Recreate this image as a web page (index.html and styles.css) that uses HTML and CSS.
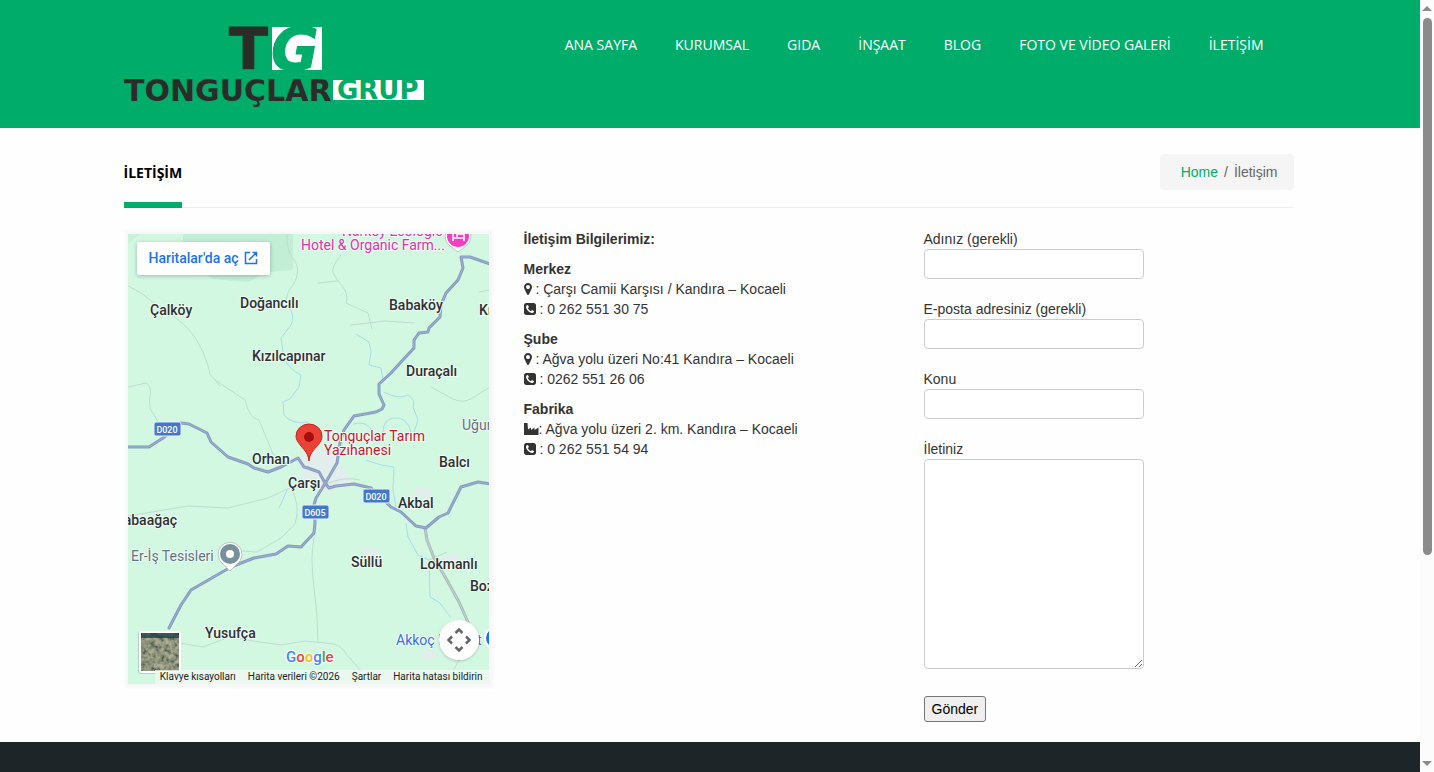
FILE: index.html
```html
<!DOCTYPE html>
<html lang="tr">
<head>
<meta charset="utf-8">
<meta name="viewport" content="width=device-width, initial-scale=1">
<title>İletişim – Tonguçlar Grup</title>
<link rel="stylesheet" href="styles.css">
</head>
<body>
<svg class="sprite" aria-hidden="true">
  <symbol id="i-pin" viewBox="0 0 1024 1792"><path d="M768 640q0-106-75-181t-181-75-181 75-75 181 75 181 181 75 181-75 75-181zm256 0q0 109-33 179l-364 774q-16 33-47.500 52t-67.500 19-67.500-19-46.500-52l-365-774q-33-70-33-179 0-212 150-362t362-150 362 150 150 362z"/></symbol>
  <symbol id="i-phone" viewBox="0 0 1536 1792"><path d="M1280 1193q0-11-2-16t-18-16.500-40.500-25-47.500-26.500-45.500-25-28.500-15q-5-3-19-13t-25-15-21-5q-15 0-36.500 20.500t-39.500 45-38.500 45-33.500 20.500q-7 0-16.500-3.500t-15.500-6.500-17-9.500-14-8.500q-99-55-170-126.500t-127-170.500q-2-3-8.500-14t-9.500-17-6.500-15.500-3.500-16.500q0-13 20.500-33.500t45-38.500 45-39.500 20.500-36.500q0-10-5-21t-15-25-13-19q-3-6-15-28.500t-25-45.500-26.500-47.500-25-40.500-16.500-18-16-2q-48 0-101 22-46 21-80 94.500t-34 130.500q0 16 2.500 34t5 30.500 9 33 10 29.500 12.500 33 11 30q60 164 216.500 320.500t320.500 216.500q6 2 30 11t33 12.500 29.500 10 33 9 30.500 5 34 2.500q57 0 130.500-34t94.500-80q22-53 22-101zm256-777v960q0 119-84.500 203.500t-203.500 84.500h-960q-119 0-203.500-84.500t-84.500-203.500v-960q0-119 84.500-203.500t203.500-84.500h960q119 0 203.500 84.500t84.500 203.500z"/></symbol>
  <symbol id="i-factory" viewBox="0 0 15 14"><path d="M0 1h3.500l.5 6.500L7 5.500v2.500l3.500-2.500v2.500L14.500 5.500V13H0z"/></symbol>
</svg>

<header class="site-header">
  <div class="container header-row">
    <a class="logo" href="#" aria-label="Tonguçlar Grup">
      <svg width="300" height="84" viewBox="0 0 300 84">
        <rect x="148" y="1" width="50" height="43" fill="#fff"/>
        <text x="105" y="43" class="mark-t">T</text>
        <text x="147" y="44" class="mark-g">G</text>
        <rect x="209" y="54" width="91" height="20" fill="#fff"/>
        <text x="0" y="75" class="word-dark">TONGUÇLAR</text>
        <text x="213" y="73" class="word-green">GRUP</text>
      </svg>
    </a>
    <nav class="nav">
      <a href="#">ANA SAYFA</a>
      <a href="#">KURUMSAL</a>
      <a href="#">GIDA</a>
      <a href="#">İNŞAAT</a>
      <a href="#">BLOG</a>
      <a href="#">FOTO VE VİDEO GALERİ</a>
      <a href="#">İLETİŞİM</a>
    </nav>
  </div>
</header>

<main class="main">
  <div class="container">
    <div class="title-row">
      <h1 class="title">İLETİŞİM</h1>
      <nav class="crumbs" aria-label="Sayfa yolu"><a href="#">Home</a><span>/</span><span>İletişim</span></nav>
    </div>

    <div class="columns">
      <figure class="map">
        <svg class="map-art" viewBox="127 234 361 450" preserveAspectRatio="xMidYMid slice" role="img" aria-label="Kandıra haritası">
          <defs>
            <filter id="ground" x="0" y="0" width="1" height="1">
              <feTurbulence type="fractalNoise" baseFrequency="0.220" numOctaves="4" seed="7"/>
              <feColorMatrix values="0.7 0 0 0 -0.080  0.6 0 0 0 -0.010  0.4 0 0 0 0  0 0 0 0 1"/>
            </filter>
          </defs>
          <rect x="127" y="234" width="362" height="450" fill="#d3f8e2"/>
          <path d="M182 234h110v36l-25 2-20 10-35-3-14-9-16-12z" fill="#c3eed6"/>
          <path d="M127 244l12-10h-12z" fill="#c9f1da"/>
          <path class="town" d="M299 455l12-8 22 4 12 22 10 12-20 5-12 4-14-12-14-2zM300 464l-8 14 8 6zM436 560l20-8 4 12-16 4zM416 486l16 4-4 10-16-4zM365 546l14 4-6 8-12-2zM418 654l14-8 4 10-12 4z"/>

          <g class="track">
            <path d="M127 286q14 6 22 14l26 18q16 12 24 28t10 28l10 12"/>
            <path d="M127 387l18-4q6 3 4 14t4 18l6 10"/>
            <path d="M214 380l30 20q4 18 14 20l14 34 14 10"/>
            <path d="M340 255q-10 12-8 18l5 8-20 2m20-2q12 12 8 22l22 10 4 16"/>
            <path d="M286 234q-1 16 7 26t-1 25q-10 12-5 20"/>
            <path d="M430 387l22 12q12 6 24-4l13-8"/>
            <path d="M127 516l60-10 40 2 40-10 26-12"/>
            <path d="M290 488q10 18 4 36l-16 16"/>
            <path d="M325 484q18-8 34-4"/>
            <path d="M313 537q-4 20 0 50t4 56"/>
            <path d="M178 643l24 4 26-10 24 4 28 4 24-4 20 2q16 0 22 12l14 16"/>
            <path d="M230 550l26 2 24-14 8-8"/>
            <path d="M350 325l34-4 30 2"/>
            <path d="M478 292l11-2M428 560l18-8m13 107l-6 10"/>
          </g>
          <g class="river">
            <path d="M287 305q8 12 3 20l-10 13 3 20q6 12 17 17l-2 12-9 12-7 3 1 13q8 10 24 7"/>
            <path d="M355 334l13 8 2 10-2 13 12 3 2 12"/>
            <path d="M383 392q14 8 24 3 8 5 5 12l5 13-4 12"/>
            <path d="M382 432q0-12 10-14 14-2 18 14m-58-8q14-4 20 8"/>
            <path d="M365 460l15 5 13 2-1 23 3 17m10 16l2 14 10 18 11 5 1 37 10 6 11 15"/>
            <path d="M286 490q-4 10-8 18"/>
          </g>

          <g fill="none" stroke-linejoin="round" stroke-linecap="round">
            <path class="road-edge grey" d="M424 528l2 12 7 18 14 24 11 20 12 27"/>
            <path class="road-fill grey" d="M424 528l2 12 7 18 14 24 11 20 12 27"/>
            <path class="road-edge" d="M489 264l-20-7-9 0 2 11-5 12-12 13-5 12-1 12-11 11-1 4-9 1-5 7v8l-13 14-10 11-12 11v10l5 11-2 4-6 3-22 4-10 14-4 13-3 20-11 19-10 16-2 7 1 18-1 10-13 14-13-1-12 8-22 4-23 9-40 23-10 15-12 23"/>
            <path class="road-edge" d="M127 447h21l14-9 18-15 8 1 18 9 4 9 17 15 20 7 6 4 14 4 13-5 17-9 6 9 4 1 11 4 6 11 4 5 7-2 18-2 17 4 20 19 10 5 15 14 10 2 13-11 9-4 13-26 17-5 12 2"/>
            <path class="road-fill" d="M489 264l-20-7-9 0 2 11-5 12-12 13-5 12-1 12-11 11-1 4-9 1-5 7v8l-13 14-10 11-12 11v10l5 11-2 4-6 3-22 4-10 14-4 13-3 20-11 19-10 16-2 7 1 18-1 10-13 14-13-1-12 8-22 4-23 9-40 23-10 15-12 23"/>
            <path class="road-fill" d="M127 447h21l14-9 18-15 8 1 18 9 4 9 17 15 20 7 6 4 14 4 13-5 17-9 6 9 4 1 11 4 6 11 4 5 7-2 18-2 17 4 20 19 10 5 15 14 10 2 13-11 9-4 13-26 17-5 12 2"/>
          </g>

          <g class="shield">
            <rect x="153" y="422" width="27" height="14" rx="2"/><text x="166" y="433">D020</text>
            <rect x="362" y="489" width="27" height="14" rx="2"/><text x="375" y="500">D020</text>
            <rect x="301" y="505" width="27" height="14" rx="2"/><text x="314" y="516">D605</text>
          </g>

          <g class="place">
            <text x="149" y="315">Çalköy</text>
            <text x="239" y="308">Doğancılı</text>
            <text x="388" y="310">Babaköy</text>
            <text x="478" y="315">Kırca</text>
            <text x="251" y="361">Kızılcapınar</text>
            <text x="405" y="376">Duraçalı</text>
            <text x="251" y="464">Orhan</text>
            <text x="287" y="488">Çarşı</text>
            <text x="438" y="467">Balcı</text>
            <text x="397" y="508">Akbal</text>
            <text x="176" y="525" text-anchor="end">Kabaağaç</text>
            <text x="350" y="567">Süllü</text>
            <text x="419" y="569">Lokmanlı</text>
            <text x="469" y="591">Bozlar</text>
            <text x="204" y="638">Yusufça</text>
          </g>
          <g class="poi">
            <text x="461" y="430" class="muted">Uğurlu</text>
            <text x="130" y="561" class="muted">Er-İş Tesisleri</text>
            <text x="341" y="236" class="hotel">Narköy Ecologic</text>
            <text x="300" y="250" class="hotel">Hotel &amp; Organic Farm...</text>
            <text x="323" y="441" class="target">Tonguçlar Tarım</text>
            <text x="323" y="455" class="target">Yazıhanesi</text>
            <text x="395" y="645" class="shop">Akkoç Market</text>
          </g>

          <path d="M229 571l-7-7a12 12 0 1 1 14 0z" fill="#fff" stroke="#b7c6c0"/>
          <circle cx="229" cy="554" r="10" fill="#78909c"/><circle cx="229" cy="554" r="4" fill="#fff"/>
          <path d="M457 252l-8-6a13 13 0 1 1 16 0z" fill="#fff" stroke="#b7c6c0"/>
          <circle cx="457" cy="236" r="11" fill="#f33fc0"/>
          <path d="M452 231v10m0-3h11v3m0-3v-4h-7v4" fill="none" stroke="#fff" stroke-width="1.500"/>
          <circle cx="495" cy="638" r="12" fill="#fff"/><circle cx="495" cy="638" r="10" fill="#1a73e8"/>
          <path d="M308 461c-1-8-4-10-8-15-3-4-5-6-5-10a13 12 0 0 1 26 0c0 4-2 7-5 10-4 5-7 7-8 15z" fill="#ea4335" stroke="#c5221f"/>
          <circle cx="308" cy="437" r="5" fill="#a50e0e"/>

          <text x="285" y="662" class="google"><tspan fill="#4285f4">G</tspan><tspan fill="#ea4335">o</tspan><tspan fill="#fbbc04">o</tspan><tspan fill="#4285f4">g</tspan><tspan fill="#34a853">l</tspan><tspan fill="#ea4335">e</tspan></text>
          <rect x="137" y="631" width="43" height="43" rx="3" fill="#7d9a8a" opacity=".4"/>
          <rect x="138" y="631" width="42" height="42" rx="2" fill="#fff"/>
          <rect x="140" y="633" width="38" height="38" filter="url(#ground)"/>
          <rect x="140" y="633" width="38" height="5" fill="#12303f" opacity=".7"/>
        </svg>
        <a class="map-open" href="#">Haritalar'da aç
          <svg width="14" height="14" viewBox="0 0 14 14" fill="none" stroke="#1a73e8" stroke-width="1.500"><path d="M6 1.500H1.500v11h11V8M8.500 1.500h4v4M12.500 1.500L5 9"/></svg>
        </a>
        <button class="map-cam" type="button" aria-label="Harita kamera kontrolleri">
          <svg width="24" height="24" viewBox="0 0 24 24" fill="none" stroke="#666" stroke-width="2.500"><path d="M8.500 5L12 1.500 15.500 5M8.500 19l3.500 3.500 3.500-3.500M5 8.500L1.500 12 5 15.500M19 8.500l3.500 3.500-3.500 3.500"/></svg>
        </button>
        <div class="map-legal"><a href="#">Klavye kısayolları</a><span>Harita verileri ©2026</span><a href="#">Şartlar</a><a href="#">Harita hatası bildirin</a></div>
      </figure>

      <section class="info">
        <p><strong>İletişim Bilgilerimiz:</strong></p>
        <p><strong>Merkez</strong><br>
          <svg class="ico pin"><use href="#i-pin"/></svg> : Çarşı Camii Karşısı / Kandıra – Kocaeli<br>
          <svg class="ico phone"><use href="#i-phone"/></svg> : 0 262 551 30 75</p>
        <p><strong>Şube</strong><br>
          <svg class="ico pin"><use href="#i-pin"/></svg> : Ağva yolu üzeri No:41 Kandıra – Kocaeli<br>
          <svg class="ico phone"><use href="#i-phone"/></svg> : 0262 551 26 06</p>
        <p><strong>Fabrika</strong><br>
          <svg class="ico factory"><use href="#i-factory"/></svg>: Ağva yolu üzeri 2. km. Kandıra – Kocaeli<br>
          <svg class="ico phone"><use href="#i-phone"/></svg> : 0 262 551 54 94</p>
      </section>

      <form class="form">
        <div class="field"><label for="ad">Adınız (gerekli)</label><input id="ad" type="text"></div>
        <div class="field"><label for="eposta">E-posta adresiniz (gerekli)</label><input id="eposta" type="email"></div>
        <div class="field"><label for="konu">Konu</label><input id="konu" type="text"></div>
        <div class="field"><label for="ileti">İletiniz</label><textarea id="ileti"></textarea></div>
        <button class="send" type="submit">Gönder</button>
      </form>
    </div>
  </div>
</main>
<footer class="site-footer"></footer>

<div class="scroll" aria-hidden="true">
  <svg width="10" height="5" viewBox="0 0 10 5"><path d="M5 0l5 5H0z"/></svg>
  <div class="scroll-track"><div class="scroll-thumb"></div></div>
  <svg width="10" height="5" viewBox="0 0 10 5"><path d="M0 0h10L5 5z"/></svg>
</div>
</body>
</html>
```
FILE: styles.css
```css
* { box-sizing: border-box; }

body {
  margin: 0;
  padding-right: 14px;
  min-height: 100vh;
  display: flex;
  flex-direction: column;
  background: #fefefe;
  color: #333;
  font: 14px/20px "Liberation Sans", Arial, sans-serif;
}

a { color: #00ac69; text-decoration: none; }
p { margin: 0 0 10px; }
.sprite { display: none; }

.site-header, .main { padding: 0 16px 0 13px; }
.container { max-width: 1170px; margin: 0 auto; }

/* Header */
.site-header { background: #00ac69; }
.header-row {
  display: flex;
  justify-content: space-between;
  align-items: flex-start;
  min-height: 128px;
  padding: 26px 30px 18px 0;
}
.logo svg { display: block; overflow: visible; }
.logo text { font-family: "DejaVu Sans", sans-serif; font-weight: bold; }
.mark-t { font-size: 57px; fill: #2b2b29; stroke: #2b2b29; }
.mark-g { font-size: 58px; font-style: italic; fill: #00ac69; stroke: #00ac69; }
.word-dark { font-size: 30px; fill: #2b2b29; }
.word-green { font-size: 26px; fill: #00ac69; }
.nav { display: flex; flex-wrap: wrap; gap: 0 38px; padding-top: 9px; }
.nav a { color: #fff; font-family: "Open Sans", sans-serif; }

/* Page title */
.title-row {
  display: flex;
  justify-content: space-between;
  align-items: flex-start;
  margin: 26px 0 21px;
  border-bottom: 1px solid #eee;
}
.title {
  margin: 0 0 -1px;
  padding: 9px 0 19px;
  border-bottom: 6px solid #00ac69;
  color: #000;
  font: bold 14px/20px "Open Sans", sans-serif;
}
.crumbs {
  display: flex;
  gap: 6px;
  padding: 8px 16px 8px 21px;
  border-radius: 4px;
  background: #f5f5f5;
  color: #666;
}

/* Columns */
.columns {
  display: grid;
  grid-template-columns: repeat(3, minmax(0, 1fr));
  gap: 30px;
  align-items: start;
  padding-bottom: 20px;
}

/* Map */
.map {
  position: relative;
  margin: 0;
  padding: 5px 5px 5px 4px;
  font-family: Roboto, sans-serif;
  background: #f7f7f7;
  box-shadow: inset 0 0 3px 1px #fefefe;
}
.map-art { display: block; width: 100%; height: 450px; }
.map-art text { font-family: Roboto, sans-serif; }
.town { fill: #e2eeec; }
.track { fill: none; stroke: #bedccf; stroke-width: 1; }
.river { fill: none; stroke: #a3dfe8; stroke-width: 1; }
.road-edge { stroke: #8499bd; stroke-width: 3; }
.road-fill { stroke: #9fb4d3; stroke-width: 1; }
.road-edge.grey { stroke: #a9bab7; }
.road-fill.grey { stroke: #c3d3d0; }
.shield rect { fill: #4377c9; stroke: #e6f2ff; }
.shield text { fill: #fff; font-size: 9px; font-weight: 500; text-anchor: middle; }
.place text, .poi text {
  font-size: 14px;
  paint-order: stroke;
  stroke: #effcf5;
  stroke-width: 2px;
  stroke-linejoin: round;
}
.place text { font-weight: 500; fill: #2d3033; }
.poi .muted { fill: #5f7480; }
.poi .hotel { fill: #e030ac; }
.poi .target { fill: #c5162b; }
.poi .shop { fill: #3b6fe0; }
.map-art .google {
  font-size: 15px;
  font-weight: 500;
  paint-order: stroke;
  stroke: #fff;
  stroke-width: 2px;
}
.map-open {
  position: absolute;
  top: 13px;
  left: 13px;
  display: flex;
  align-items: center;
  gap: 5px;
  padding: 6px 12px 7px;
  border-radius: 2px;
  background: #fff;
  box-shadow: 0 1px 4px rgba(0, 0, 0, .25);
  color: #1a73e8;
  font-weight: 500;
}
.map-cam {
  position: absolute;
  right: 15px;
  bottom: 29px;
  display: grid;
  place-items: center;
  width: 40px;
  height: 40px;
  padding: 0;
  border: 0;
  border-radius: 50%;
  background: #fff;
  box-shadow: 0 1px 3px rgba(0, 0, 0, .2);
}
.map-legal {
  position: absolute;
  right: 5px;
  bottom: 5px;
  display: flex;
  gap: 12px;
  padding: 0 6px 0 5px;
  background: rgba(240, 247, 243, .8);
  color: #222;
  font-size: 10px;
  line-height: 14px;
  white-space: nowrap;
}
.map-legal a { color: inherit; }

/* Contact details */
.ico { fill: #333; height: 14px; vertical-align: -2px; }
.pin { width: 8px; }
.phone { width: 12px; }
.factory { width: 15px; }

/* Form */
.field { margin-bottom: 20px; }
.field label { display: block; }
.field input, .field textarea {
  display: block;
  width: 220px;
  max-width: 100%;
  height: 30px;
  padding: 4px 6px;
  border: 1px solid #ccc;
  border-radius: 4px;
  background: #fff;
  font: inherit;
}
.field textarea { height: 210px; }
.send {
  margin-top: 7px;
  padding: 2px 7px;
  border: 1px solid #767676;
  border-radius: 3px;
  background: #efefef;
  color: #000;
  font: inherit;
}

.site-footer { flex: 1; min-height: 30px; background: #1e2528; }

/* Scroll bar */
.scroll {
  position: fixed;
  top: 0;
  right: 0;
  bottom: 0;
  width: 14px;
  display: flex;
  flex-direction: column;
  align-items: center;
  gap: 7px;
  padding: 6px 0;
  background: #fcfcfc;
}
.scroll svg { fill: #8b8b8b; }
.scroll-track { flex: 1; width: 9px; }
.scroll-thumb { height: 73%; border-radius: 5px; background: #8b8b8b; }
```
